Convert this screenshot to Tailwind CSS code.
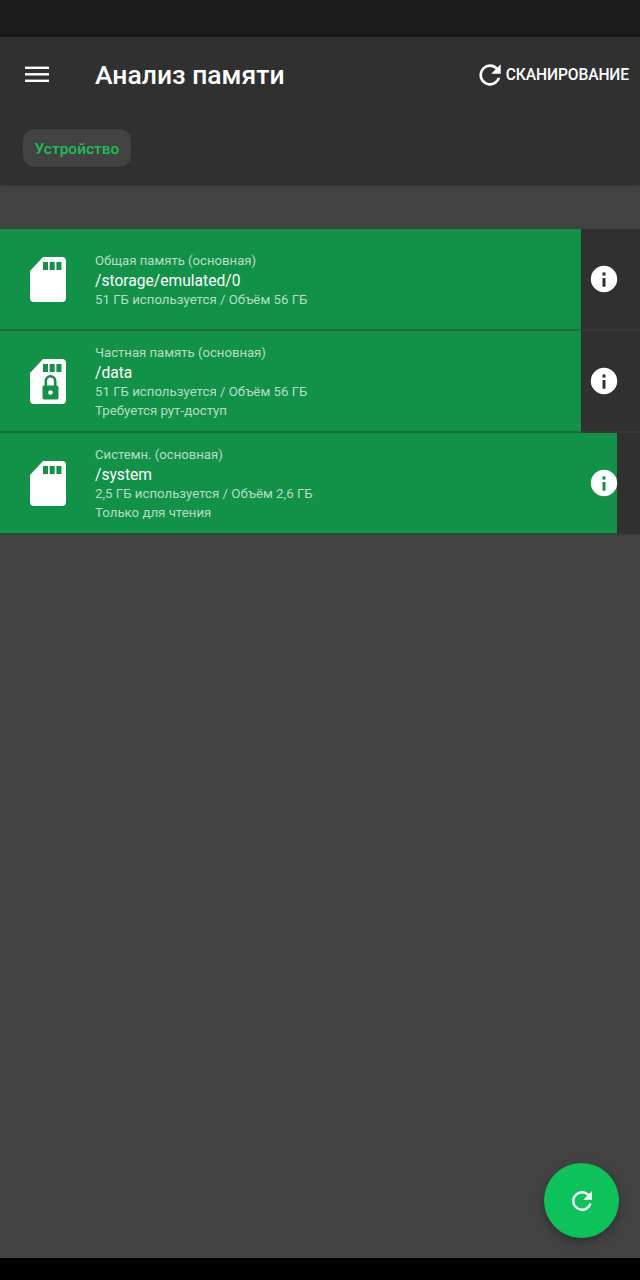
<!DOCTYPE html>
<html lang="ru">
<head>
<meta charset="utf-8">
<script src="https://cdn.jsdelivr.net/npm/@tailwindcss/browser@4"></script>
</head>
<body class="m-0">
<div class="relative w-[640px] h-[1280px] flex flex-col overflow-hidden bg-[#424242] font-['Roboto',sans-serif] text-white">
  <div class="h-[37px] bg-[#1a1a1a] shrink-0"></div>
  <header class="h-[148px] bg-[#303030] shrink-0 flex flex-col shadow-[0_1px_3px_rgba(0,0,0,0.15)]">
    <div class="h-[76px] flex items-center">
      <svg class="ml-[25px] w-6 h-[18px] shrink-0" viewBox="0 0 24 18" fill="#fff"><rect y="0.6" width="24" height="2.4"/><rect y="7.1" width="24" height="2.4"/><rect y="13.6" width="24" height="2.4"/></svg>
      <h1 class="ml-[46px] text-[26.5px] leading-[32px] font-medium">Анализ памяти</h1>
      <div class="ml-auto mr-[11px] flex items-center">
        <svg class="w-8 h-8 shrink-0" viewBox="0 0 24 24" fill="#fff"><path d="M17.65 6.35A7.96 7.96 0 0 0 12 4a8 8 0 1 0 7.73 10h-2.08A6 6 0 1 1 12 6c1.66 0 3.14.69 4.22 1.78L13 11h7V4l-2.35 2.35z"/></svg>
        <span class="text-[15.6px] leading-5 font-medium tracking-[-0.1px]">СКАНИРОВАНИЕ</span>
      </div>
    </div>
    <div class="pl-[23px] pt-[16px]">
      <div class="w-[108px] h-[38px] rounded-[12px] bg-[#424242] flex items-center justify-center pt-[3px] text-[15.5px] font-medium text-[#1ebc58]">Устройство</div>
    </div>
  </header>
  <main class="pt-[44px] flex flex-col">
    <div class="relative h-[102px] bg-[#303030] border-b-2 border-[#383838]">
      <div class="absolute top-0 left-0 h-[102px] w-[581px] bg-[#129148] border-b-2 border-[#1b6b3d]"></div>
      <div class="relative h-full flex items-center">
        <svg class="ml-[24px] w-[48px] h-[48px] shrink-0" viewBox="0 0 48 48" fill="#fff"><path fill-rule="evenodd" d="M19 2h19a4 4 0 0 1 4 4v37a4 4 0 0 1-4 4H10a4 4 0 0 1-4-4V16zM19 7v8h5V7zM25.7 7v8h5V7zM32.4 7v8h5V7z"/></svg>
        <div class="ml-[23px] flex flex-col pt-[2px]">
          <div class="text-[13.15px] leading-[18px] text-white/70">Общая память (основная)</div>
          <div class="mt-[1px] -mb-[1px] text-[15.6px] leading-[21px]">/storage/emulated/0</div>
          <div class="text-[13.25px] leading-[18px] text-white/70">51 ГБ используется / Объём 56 ГБ</div>
        </div>
        <svg class="absolute left-[590px] top-[36px] w-7 h-7" viewBox="0 0 28 28"><circle cx="14" cy="14" r="13.2" fill="#fff"/><rect x="12.5" y="13" width="3" height="8.7" fill="#303030"/><rect x="12.5" y="7.4" width="3" height="3.2" fill="#303030"/></svg>
      </div>
    </div>
    <div class="relative h-[102px] bg-[#303030] border-b-2 border-[#383838]">
      <div class="absolute top-0 left-0 h-[102px] w-[581px] bg-[#129148] border-b-2 border-[#1b6b3d]"></div>
      <div class="relative h-full flex items-center">
        <svg class="ml-[24px] w-[48px] h-[48px] shrink-0" viewBox="0 0 48 48" fill="#fff"><path fill-rule="evenodd" d="M19 2h19a4 4 0 0 1 4 4v37a4 4 0 0 1-4 4H10a4 4 0 0 1-4-4V16zM19 7v8h5V7zM25.7 7v8h5V7zM32.4 7v8h5V7z"/><path fill="#129148" fill-rule="evenodd" d="M26.5 18a6 6 0 0 1 6 6v4.5h.3a1.7 1.7 0 0 1 1.7 1.7v10.6a1.7 1.7 0 0 1-1.7 1.7H20.2a1.7 1.7 0 0 1-1.7-1.7V30.2a1.7 1.7 0 0 1 1.7-1.7h.3V24a6 6 0 0 1 6-6zM26.5 20.6A3.4 3.4 0 0 0 23.1 24v4.5h6.8V24a3.4 3.4 0 0 0-3.4-3.4zM26.5 33.2a2.3 2.3 0 1 0 0 4.6 2.3 2.3 0 0 0 0-4.6z"/></svg>
        <div class="ml-[23px] flex flex-col pt-[2px]">
          <div class="text-[13.15px] leading-[18px] text-white/70">Частная память (основная)</div>
          <div class="mt-[1px] -mb-[1px] text-[15.6px] leading-[21px]">/data</div>
          <div class="text-[13.25px] leading-[18px] text-white/70">51 ГБ используется / Объём 56 ГБ</div>
          <div class="text-[13.25px] leading-[20px] text-white/70">Требуется рут-доступ</div>
        </div>
        <svg class="absolute left-[590px] top-[36px] w-7 h-7" viewBox="0 0 28 28"><circle cx="14" cy="14" r="13.2" fill="#fff"/><rect x="12.5" y="13" width="3" height="8.7" fill="#303030"/><rect x="12.5" y="7.4" width="3" height="3.2" fill="#303030"/></svg>
      </div>
    </div>
    <div class="relative h-[102px] bg-[#303030] border-b-2 border-[#383838]">
      <div class="absolute top-0 left-0 h-[102px] w-[617px] bg-[#129148] border-b-2 border-[#2c4a38]"></div>
      <div class="relative h-full flex items-center">
        <svg class="ml-[24px] w-[48px] h-[48px] shrink-0" viewBox="0 0 48 48" fill="#fff"><path fill-rule="evenodd" d="M19 2h19a4 4 0 0 1 4 4v37a4 4 0 0 1-4 4H10a4 4 0 0 1-4-4V16zM19 7v8h5V7zM25.7 7v8h5V7zM32.4 7v8h5V7z"/></svg>
        <div class="ml-[23px] flex flex-col pt-[2px]">
          <div class="text-[13.15px] leading-[18px] text-white/70">Системн. (основная)</div>
          <div class="mt-[1px] -mb-[1px] text-[15.6px] leading-[21px]">/system</div>
          <div class="text-[13.25px] leading-[18px] text-white/70">2,5 ГБ используется / Объём 2,6 ГБ</div>
          <div class="text-[13.25px] leading-[20px] text-white/70">Только для чтения</div>
        </div>
        <svg class="absolute left-[590px] top-[36px] w-7 h-7" viewBox="0 0 28 28"><circle cx="14" cy="14" r="13.2" fill="#fff"/><rect x="12.5" y="13" width="3" height="8.7" fill="#129148"/><rect x="12.5" y="7.4" width="3" height="3.2" fill="#129148"/></svg>
      </div>
    </div>
  </main>
  <button class="absolute left-[544px] top-[1163px] w-[75px] h-[75px] rounded-full bg-[#0bc35a] flex items-center justify-center shadow-[0_4px_10px_rgba(0,0,0,0.25)]">
    <svg class="w-[30px] h-[30px]" viewBox="0 0 24 24" fill="#fff"><path d="M17.65 6.35A7.96 7.96 0 0 0 12 4a8 8 0 1 0 7.73 10h-2.08A6 6 0 1 1 12 6c1.66 0 3.14.69 4.22 1.78L13 11h7V4l-2.35 2.35z"/></svg>
  </button>
  <div class="absolute left-0 right-0 bottom-0 h-[22px] bg-black"></div>
</div>
</body>
</html>
